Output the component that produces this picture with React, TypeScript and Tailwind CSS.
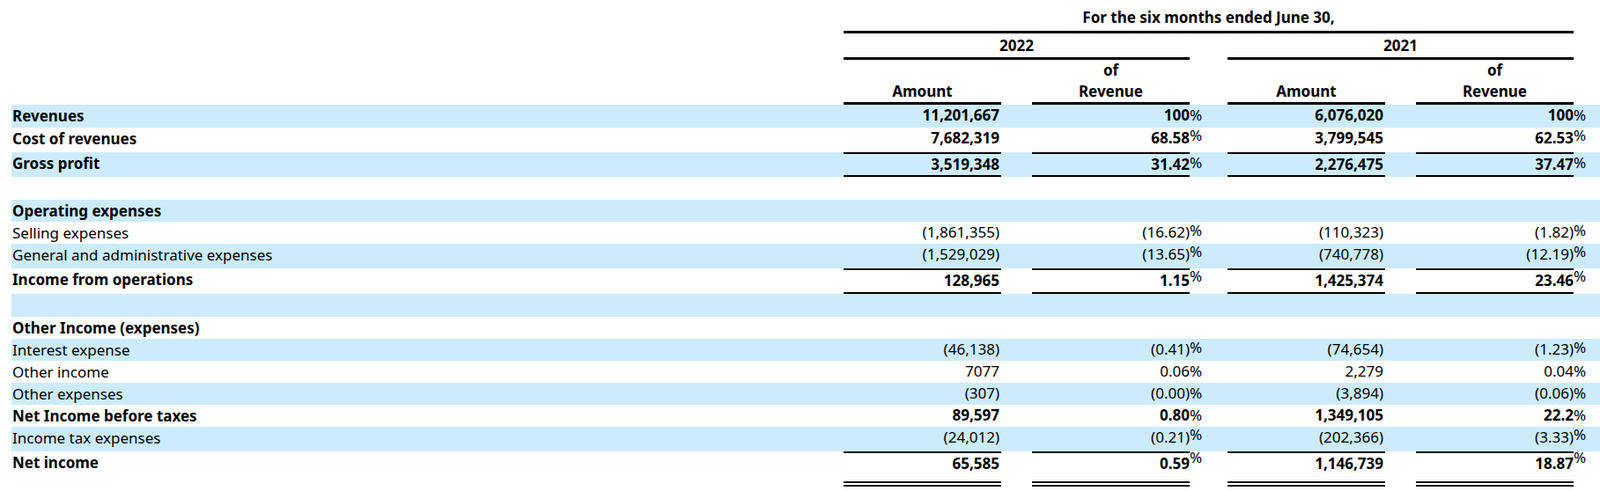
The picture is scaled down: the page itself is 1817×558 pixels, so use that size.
import React from "react";

const G = "grid grid-cols-[945px_179px_35px_179px_43px_179px_35px_179px_25px]";

type R = {
  label: string;
  bold?: boolean;
  blue?: boolean;
  h: number;
  v?: [string, string, string, string];
  raise?: [number, number];
  top?: boolean;
  bottom?: boolean;
  dbl?: boolean;
};

const rows: R[] = [
  { label: "Revenues", bold: true, blue: true, h: 26, v: ["11,201,667", "100", "6,076,020", "100"], raise: [0, 0] },
  { label: "Cost of revenues", bold: true, h: 28, v: ["7,682,319", "68.58", "3,799,545", "62.53"], raise: [3, 3] },
  { label: "Gross profit", bold: true, blue: true, h: 28, v: ["3,519,348", "31.42", "2,276,475", "37.47"], raise: [0, 0], top: true, bottom: true },
  { label: "", h: 26 },
  { label: "Operating expenses", bold: true, blue: true, h: 25 },
  { label: "Selling expenses", h: 25, v: ["(1,861,355)", "(16.62)", "(110,323)", "(1.82)"], raise: [2, 2] },
  { label: "General and administrative expenses", blue: true, h: 28, v: ["(1,529,029)", "(13.65)", "(740,778)", "(12.19)"], raise: [3, 3] },
  { label: "Income from operations", bold: true, h: 29, v: ["128,965", "1.15", "1,425,374", "23.46"], raise: [3, 3], top: true, bottom: true },
  { label: "", blue: true, h: 26 },
  { label: "Other Income (expenses)", bold: true, h: 25 },
  { label: "Interest expense", blue: true, h: 25, v: ["(46,138)", "(0.41)", "(74,654)", "(1.23)"], raise: [2, 2] },
  { label: "Other income", h: 25, v: ["7077", "0.06", "2,279", "0.04"], raise: [0, 0] },
  { label: "Other expenses", blue: true, h: 25, v: ["(307)", "(0.00)", "(3,894)", "(0.06)"], raise: [0, 0] },
  { label: "Net Income before taxes", bold: true, h: 25, v: ["89,597", "0.80", "1,349,105", "22.2"], raise: [0, 0] },
  { label: "Income tax expenses", blue: true, h: 28, v: ["(24,012)", "(0.21)", "(202,366)", "(3.33)"], raise: [3, 3] },
  { label: "Net income", bold: true, h: 40, v: ["65,585", "0.59", "1,146,739", "18.87"], raise: [5, 5], top: true, dbl: true },
];

function Row({ r }: { r: R }) {
  const bg = r.blue ? "bg-[#ccecfd]" : "";
  const cell = (extra: string) =>
    `${r.top ? "border-t-2 border-black" : ""} ${r.bottom ? "border-b-2 border-black" : ""} ${r.dbl ? "border-b-[6px] border-double border-black" : ""} ${extra}`;
  const v = r.v;
  return (
    <div className={`${G} ${bg} ${r.bold ? "font-bold" : ""}`} style={{ height: r.h }}>
      <div className="pl-[1px] leading-[25px]">{r.label}</div>
      {v ? (
        <>
          <div className={cell("text-right pr-[2px] leading-[24px]")}>{v[0]}</div>
          <div />
          <div className={cell("text-right leading-[24px]")}>{v[1]}</div>
          <div className="leading-[24px] font-normal">
            <span className="relative" style={{ top: -r.raise![0] }}>%</span>
          </div>
          <div className={cell("text-right pr-[2px] leading-[24px]")}>{v[2]}</div>
          <div />
          <div className={cell("text-right leading-[24px]")}>{v[3]}</div>
          <div className="leading-[24px] font-normal">
            <span className="relative" style={{ top: -r.raise![1] }}>%</span>
          </div>
        </>
      ) : null}
    </div>
  );
}

export default function App() {
  return (
    <div className="w-[1817px] h-[558px] bg-white text-black text-[17px] font-['Liberation_Serif',serif]">
      <div className="pl-[13px]">
        <div className={`${G} font-bold h-[38px]`}>
          <div />
          <div className="col-span-7 text-center border-b-[3px] border-black pt-[7px] leading-[26px]">For the six months ended June 30,</div>
        </div>
        <div className={`${G} font-bold h-[30px]`}>
          <div />
          <div className="col-span-3 text-center border-b-[3px] border-black leading-[27px]">2022</div>
          <div />
          <div className="col-span-3 text-center border-b-[3px] border-black leading-[27px]">2021</div>
        </div>
        <div className={`${G} font-bold h-[51px]`}>
          <div />
          <div className="border-b-[3px] border-black text-center flex items-end justify-center leading-[24px]">Amount</div>
          <div />
          <div className="border-b-[3px] border-black text-center flex flex-col justify-end leading-[24px]"><span>of</span><span>Revenue</span></div>
          <div />
          <div className="border-b-[3px] border-black text-center flex items-end justify-center leading-[24px]">Amount</div>
          <div />
          <div className="border-b-[3px] border-black text-center flex flex-col justify-end leading-[24px]"><span>of</span><span>Revenue</span></div>
        </div>
        {rows.map((r, i) => (
          <Row key={i} r={r} />
        ))}
      </div>
    </div>
  );
}
